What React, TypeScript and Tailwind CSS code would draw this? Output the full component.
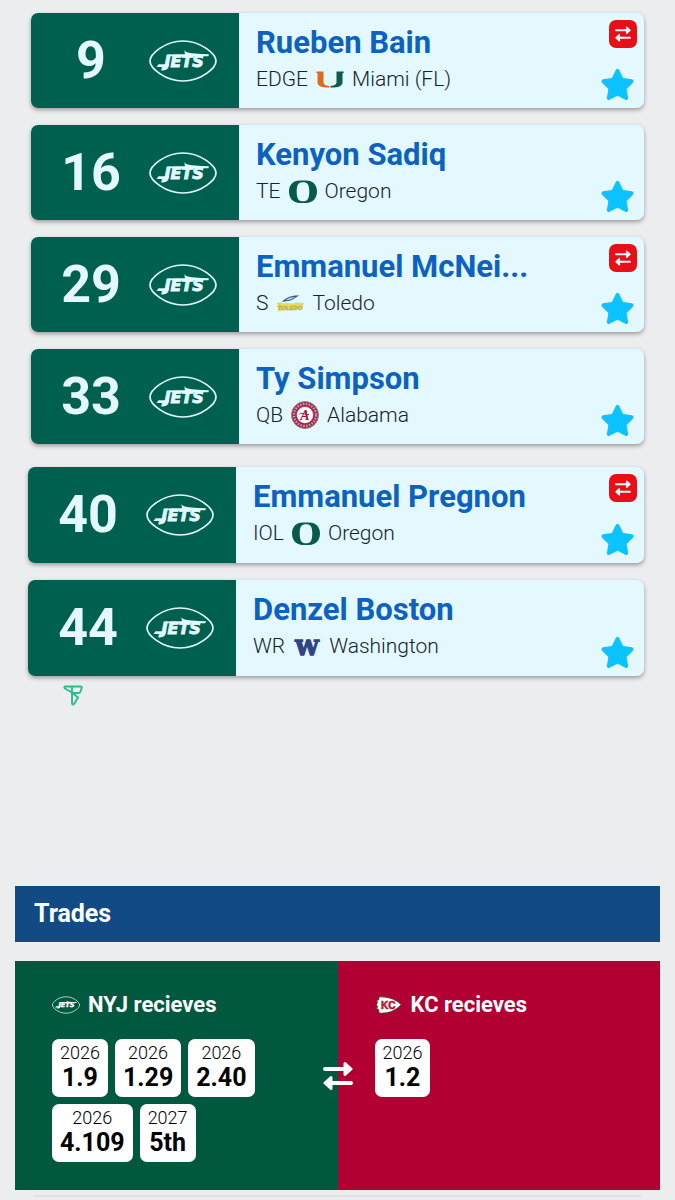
import React from "react";
import { FaStar } from "react-icons/fa6";

type School = "miami" | "oregon" | "toledo" | "alabama" | "washington";

interface Pick {
  number: number;
  name: string;
  position: string;
  school: string;
  logo: School;
  traded?: boolean;
}

interface Chip {
  year: string;
  value: string;
}

const earlyPicks: Pick[] = [
  { number: 9, name: "Rueben Bain", position: "EDGE", school: "Miami (FL)", logo: "miami", traded: true },
  { number: 16, name: "Kenyon Sadiq", position: "TE", school: "Oregon", logo: "oregon" },
  { number: 29, name: "Emmanuel McNei...", position: "S", school: "Toledo", logo: "toledo", traded: true },
  { number: 33, name: "Ty Simpson", position: "QB", school: "Alabama", logo: "alabama" },
];

const latePicks: Pick[] = [
  { number: 40, name: "Emmanuel Pregnon", position: "IOL", school: "Oregon", logo: "oregon", traded: true },
  { number: 44, name: "Denzel Boston", position: "WR", school: "Washington", logo: "washington" },
];

const jetsChips: Chip[] = [
  { year: "2026", value: "1.9" },
  { year: "2026", value: "1.29" },
  { year: "2026", value: "2.40" },
  { year: "2026", value: "4.109" },
  { year: "2027", value: "5th" },
];

const chiefsChips: Chip[] = [{ year: "2026", value: "1.2" }];

function JetsLogo({ className }: { className: string }) {
  return (
    <svg viewBox="0 0 68 42" className={className} role="img" aria-label="New York Jets">
      <path
        d="M1 21C1 14 16 1 34 1s33 13 33 20-15 20-33 20S1 28 1 21z"
        fill="none"
        stroke="currentColor"
        strokeWidth="1.700"
      />
      <path d="M20 14.400h40l-.8 1.800H19z" fill="currentColor" />
      <path d="M34.500 9.500c1.500 2.500 5 3.700 11 4l14.500.9-1 1H35.500c1-1.500 0-4.200-1-5.900z" fill="currentColor" />
      <path d="M9.500 24.200h11l-1.500 2.800H7.500z" fill="currentColor" />
      <text
        x="15.500"
        y="27"
        fill="currentColor"
        stroke="currentColor"
        strokeWidth="0.9"
        fontFamily="'DejaVu Sans', sans-serif"
        fontStyle="italic"
        fontWeight="700"
        fontSize="16"
      >
        JETS
      </text>
    </svg>
  );
}

function ChiefsLogo() {
  return (
    <svg viewBox="0 0 28 18" className="h-[18px] w-7 shrink-0" role="img" aria-label="Kansas City Chiefs">
      <path
        d="M4 .8C13 .5 21 3 26.500 8.800 21 14.500 13 18 4 17.200L3.500 14 1.500 13l.8-2.500L1 8.800l1.300-2.300L1.500 4.500l2-1z"
        fill="#fff"
        stroke="#6b2f3a"
        strokeWidth="1.200"
      />
      <text
        x="6"
        y="12.500"
        fill="#d0102f"
        stroke="#b0142e"
        strokeWidth="0.600"
        fontFamily="'Liberation Sans', sans-serif"
        fontWeight="700"
        fontSize="10"
      >
        KC
      </text>
    </svg>
  );
}

function SchoolLogo({ school }: { school: School }) {
  switch (school) {
    case "miami":
      return (
        <svg viewBox="0 0 28 28" className="size-7 shrink-0" aria-hidden="true">
          <path d="M.3 6.500h7.200v10.300c0 2.700 1.800 4 6 4.200v1.600C5 22.600 1.500 21 1.500 17V8.500L.3 7.800z" fill="#dc6b1c" />
          <path d="M27.700 6.500h-7.200v10.300c0 2.700-1.800 4-6 4.200v1.600c8.500 0 12-1.600 12-5.600V8.500l1.200-.7z" fill="#0b5d46" />
        </svg>
      );
    case "oregon":
      return (
        <svg viewBox="0 0 28 28" className="size-7 shrink-0" aria-hidden="true">
          <path
            fillRule="evenodd"
            d="M11 3.500h6c7 0 11 4.500 11 11S24 26 17 26h-6C4 26 0 21 0 14.500S4 3.500 11 3.500zm2 1.700c-4 0-5.300 3.500-5.300 9.300s1.300 9.700 5.300 9.700h2c4 0 5.300-3.900 5.300-9.700S19 5.200 15 5.200z"
            fill="#065a4a"
          />
        </svg>
      );
    case "toledo":
      return (
        <svg viewBox="0 0 28 28" className="size-7 shrink-0" aria-hidden="true">
          <path d="M0 14l6-.8.500 1.300 5-.5 5 .5 4-1 7.500.5-2 6-5-.3-5 1.300-6-.5-6 1.700-2-.5-.5-6z" fill="#e2da68" />
          <path d="M6 13c3.500-4.500 9.500-7 17.500-6.500-3 1-5 3.500-9 5-3 1.200-5 .5-8.500 1.500z" fill="#2e5c84" />
          <path d="M9.500 11.200c3-2.200 6-3.200 9.500-3.200-2.500 1.700-5.500 3.200-9.500 3.200z" fill="#c6dce6" />
          <text
            x="1.500"
            y="20.500"
            fill="#bfb436"
            stroke="#bfb436"
            strokeWidth="0.300"
            fontFamily="'Liberation Sans', sans-serif"
            fontSize="6"
            fontWeight="700"
            fontStyle="italic"
          >
            TOLEDO
          </text>
        </svg>
      );
    case "alabama":
      return (
        <svg viewBox="0 0 28 28" className="size-7 shrink-0" aria-hidden="true">
          <circle cx="14" cy="14" r="13.500" fill="#9a2747" stroke="#8d8790" />
          <circle cx="14" cy="14" r="11" fill="none" stroke="#d795aa" strokeWidth="2.300" strokeDasharray="1.600 1.300" />
          <circle cx="14" cy="14" r="8.500" fill="#fff" stroke="#8f1f40" strokeWidth="0.600" />
          <text x="14" y="18.500" textAnchor="middle" fill="#9a1738" fontFamily="'Liberation Serif', serif" fontSize="14" fontStyle="italic" fontWeight="700">
            A
          </text>
          <path d="M8.500 13c2-2 5 1 9.500.5" fill="none" stroke="#9a1738" />
        </svg>
      );
    case "washington":
      return (
        <svg viewBox="0 0 28 28" className="size-7 shrink-0" aria-hidden="true">
          <text
            x="14"
            y="22.500"
            textAnchor="middle"
            fill="#2f4487"
            stroke="#2f4487"
            strokeWidth="1.600"
            fontFamily="'DejaVu Serif', serif"
            fontSize="21"
            fontWeight="700"
          >
            W
          </text>
        </svg>
      );
  }
}

function SwapIcon({ className }: { className: string }) {
  return (
    <svg viewBox="0 0 30 30" className={className} aria-hidden="true">
      <path d="M2 8h20M8 22h20" stroke="currentColor" strokeWidth="4" strokeLinecap="round" />
      <path
        d="M22 2.500l6 5.500-6 5.500zM8 16.500L2 22l6 5.500z"
        fill="currentColor"
        stroke="currentColor"
        strokeWidth="3"
        strokeLinejoin="round"
      />
    </svg>
  );
}

function PickCard({ pick, tall = false }: { pick: Pick; tall?: boolean }) {
  return (
    <article
      className={
        "flex overflow-hidden rounded-[7px] bg-[#e4f8ff] shadow-[0_2px_4px_rgba(0,0,0,0.35)] " + (tall ? "h-24" : "h-[95px]")
      }
    >
      <div className="flex w-[208px] shrink-0 items-center bg-[#006050] text-[#e4f8ff]">
        <span className="w-[118px] pl-[2px] text-center text-[52px] leading-[56px] font-bold">{pick.number}</span>
        <JetsLogo className="h-[42px] w-[68px]" />
      </div>
      <div className="flex min-w-0 flex-1 flex-col justify-center pl-[17px]">
        <h2 className="truncate text-[31px] leading-9 font-bold text-[#0b62c1]">{pick.name}</h2>
        <p className="flex items-center gap-2 text-[21px] leading-9 font-light text-[#14242c]">
          <span>{pick.position}</span>
          <SchoolLogo school={pick.logo} />
          <span>{pick.school}</span>
        </p>
      </div>
      <div className="flex w-[54px] shrink-0 flex-col items-end justify-between pt-[7px] pr-[7px] pb-[6px]">
        <div className="size-7">
          {pick.traded && (
            <div className="flex size-7 items-center justify-center rounded-[7px] bg-[#e80f17] text-[#e4f8ff]">
              <SwapIcon className="size-4" />
            </div>
          )}
        </div>
        <FaStar className="mr-[2px] size-[35px] text-[#0bc4ff]" />
      </div>
    </article>
  );
}

function Watermark() {
  return (
    <svg viewBox="0 0 20 21" className="mt-[9px] ml-[35px] h-[21px] w-5" aria-hidden="true">
      <path
        d="M2.500 1.500h15c1 0 1.500.700 1.200 1.500l-1.400 4c-.2.700-.7 1-1.400 1H10L2 3.500C1 2.800 1.300 1.500 2.500 1.500zM9 1.500v16.700c0 1.500 1.600 1.700 2.200.5L15 12.500 9.500 8"
        fill="none"
        stroke="#2dbd8b"
        strokeWidth="1.900"
        strokeLinejoin="round"
      />
    </svg>
  );
}

function TradeSide({ title, logo, chips, color }: { title: string; logo: React.ReactNode; chips: Chip[]; color: string }) {
  return (
    <div className={"flex-1 px-[37px] pt-7 pb-7 " + color}>
      <h3 className="flex items-center gap-2 text-[22px] leading-8 font-bold text-white">
        {logo}
        {title}
      </h3>
      <ul className="mt-[18px] flex flex-wrap gap-[7px]">
        {chips.map((chip) => (
          <li key={chip.value} className="flex h-[58px] flex-col items-center rounded-[7px] bg-white px-2 pt-1 text-black">
            <span className="text-lg leading-5 font-light">{chip.year}</span>
            <span className="text-[25px] leading-[30px] font-bold">{chip.value}</span>
          </li>
        ))}
      </ul>
    </div>
  );
}

export default function App() {
  return (
    <main className="min-h-screen bg-[#ecedef] font-['Roboto',sans-serif]">
      <section aria-label="Draft picks" className="pt-[13px]">
        <div className="flex flex-col gap-[17px] px-[31px]">
          {earlyPicks.map((pick) => (
            <PickCard key={pick.number} pick={pick} />
          ))}
        </div>
        <div className="mt-[23px] flex flex-col gap-[17px] pr-[31px] pl-7">
          {latePicks.map((pick) => (
            <PickCard key={pick.number} pick={pick} tall />
          ))}
        </div>
        <div className="pl-7">
          <Watermark />
        </div>
      </section>

      <section aria-label="Trades" className="mt-[180px] px-[15px]">
        <h2 className="bg-[#124a84] px-[19px] text-[25px] leading-[56px] font-bold text-white">Trades</h2>
        <div className="relative mt-[19px] flex min-h-[228px]">
          <TradeSide
            title="NYJ recieves"
            logo={<JetsLogo className="h-[18px] w-7 shrink-0" />}
            chips={jetsChips}
            color="bg-[#00583f]"
          />
          <TradeSide title="KC recieves" logo={<ChiefsLogo />} chips={chiefsChips} color="bg-[#b20032]" />
          <SwapIcon className="absolute top-1/2 left-1/2 size-[30px] -translate-x-1/2 -translate-y-1/2 text-white" />
        </div>
        <div className="mx-[19px] mt-[5px] h-[2px] bg-[#e0e2e4]" />
      </section>
    </main>
  );
}
